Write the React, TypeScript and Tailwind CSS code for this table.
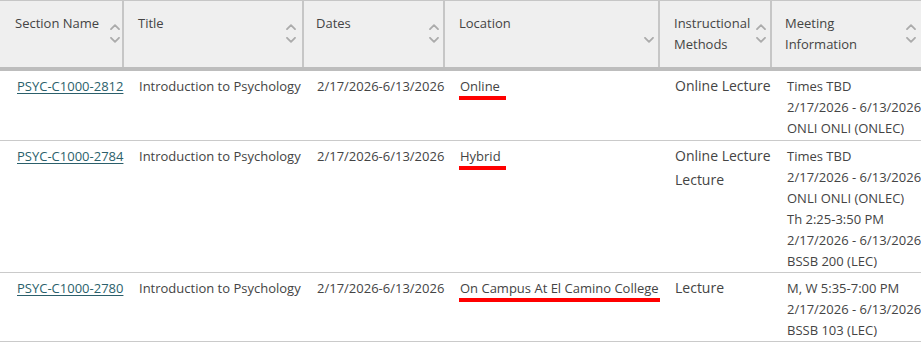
import React from "react";

const font = { fontFamily: '"Open Sans", "Liberation Sans", sans-serif' };

function Chevron({ dir, hidden }: { dir: "up" | "down"; hidden?: boolean }) {
  return (
    <svg width="10" height="6" viewBox="0 0 10 6" className={hidden ? "invisible" : ""}>
      <polyline
        points={dir === "up" ? "1,5.2 5,1.2 9,5.2" : "1,0.8 5,4.8 9,0.8"}
        fill="none"
        stroke="#ababab"
        strokeWidth="1.8"
        strokeLinecap="round"
        strokeLinejoin="round"
      />
    </svg>
  );
}

function SortIcons({ upHidden }: { upHidden?: boolean }) {
  return (
    <div className="flex flex-col gap-[7px] pt-[23px] shrink-0">
      <Chevron dir="up" hidden={upHidden} />
      <Chevron dir="down" />
    </div>
  );
}

type Row = {
  section: string;
  location: string;
  barW: string;
  methods: string[];
  meeting: string[];
  pb: string;
};

const rows: Row[] = [
  {
    section: "PSYC-C1000-2812",
    location: "Online",
    barW: "w-[47px]",
    methods: ["Online Lecture"],
    meeting: ["Times TBD", "2/17/2026 - 6/13/2026", "ONLI ONLI (ONLEC)"],
    pb: "pb-[1px]",
  },
  {
    section: "PSYC-C1000-2784",
    location: "Hybrid",
    barW: "w-[47px]",
    methods: ["Online Lecture", "Lecture"],
    meeting: [
      "Times TBD",
      "2/17/2026 - 6/13/2026",
      "ONLI ONLI (ONLEC)",
      "Th 2:25-3:50 PM",
      "2/17/2026 - 6/13/2026",
      "BSSB 200 (LEC)",
    ],
    pb: "pb-0",
  },
  {
    section: "PSYC-C1000-2780",
    location: "On Campus At El Camino College",
    barW: "w-[201px]",
    methods: ["Lecture"],
    meeting: ["M, W 5:35-7:00 PM", "2/17/2026 - 6/13/2026", "BSSB 103 (LEC)"],
    pb: "pb-0",
  },
];

export default function App() {
  return (
    <div className="w-[921px] h-[342px] overflow-hidden bg-white text-[#444]" style={font}>
      {/* Header */}
      <div className="flex h-[67px] border-t border-[#c6c6c6] bg-[#efefef] text-[13px] leading-[21px]">
        <div className="w-[124px] shrink-0 flex justify-between border-r-2 border-[#c6c6c6] pl-[15px] pr-[2px]">
          <div className="pt-[12px]">Section Name</div>
          <SortIcons />
        </div>
        <div className="w-[180px] shrink-0 flex justify-between border-r-2 border-[#c6c6c6] pl-[14px] pr-[6px]">
          <div className="pt-[12px]">Title</div>
          <SortIcons />
        </div>
        <div className="w-[141px] shrink-0 flex justify-between border-r-2 border-[#c6c6c6] pl-[12px] pr-[4px]">
          <div className="pt-[12px]">Dates</div>
          <SortIcons />
        </div>
        <div className="w-[215px] shrink-0 flex justify-between border-r-2 border-[#c6c6c6] pl-[14px] pr-[4px]">
          <div className="pt-[12px]">Location</div>
          <SortIcons upHidden />
        </div>
        <div className="w-[112px] shrink-0 flex justify-between border-r-2 border-[#c6c6c6] pl-[14px] pr-[4px]">
          <div className="pt-[12px]">
            Instructional
            <br />
            Methods
          </div>
          <SortIcons />
        </div>
        <div className="flex-1 flex justify-between pl-[13px] pr-[5px]">
          <div className="pt-[12px]">
            Meeting
            <br />
            Information
          </div>
          <SortIcons />
        </div>
      </div>
      <div className="h-[4px] bg-[#bdbdbd]" />

      {/* Body */}
      {rows.map((r) => (
        <div key={r.section} className={`flex border-b border-[#cacaca] text-[13px] leading-[21px] ${r.pb}`}>
          <div className="w-[124px] shrink-0 pl-[17px] pt-[5px] whitespace-nowrap">
            <a href="#" className="text-[#2b5f6b] underline underline-offset-2">
              {r.section}
            </a>
          </div>
          <div className="w-[180px] shrink-0 pl-[15px] pt-[5px] whitespace-nowrap">Introduction to Psychology</div>
          <div className="w-[141px] shrink-0 pl-[13px] pt-[5px] whitespace-nowrap">2/17/2026-6/13/2026</div>
          <div className="w-[215px] shrink-0 pl-[15px] pt-[5px] whitespace-nowrap">
            <div>{r.location}</div>
            <div className={`${r.barW} h-[4px] -mt-[1px] -ml-[1px] bg-[#ff0000]`} />
          </div>
          <div className="w-[112px] shrink-0 pl-[15px] pt-[3px] text-[14px] leading-[23.5px] whitespace-nowrap">
            {r.methods.map((m, i) => (
              <div key={i}>{m}</div>
            ))}
          </div>
          <div className="flex-1 pl-[15px] pt-[5px] whitespace-nowrap overflow-hidden">
            {r.meeting.map((m, i) => (
              <div key={i}>{m}</div>
            ))}
          </div>
        </div>
      ))}
    </div>
  );
}
